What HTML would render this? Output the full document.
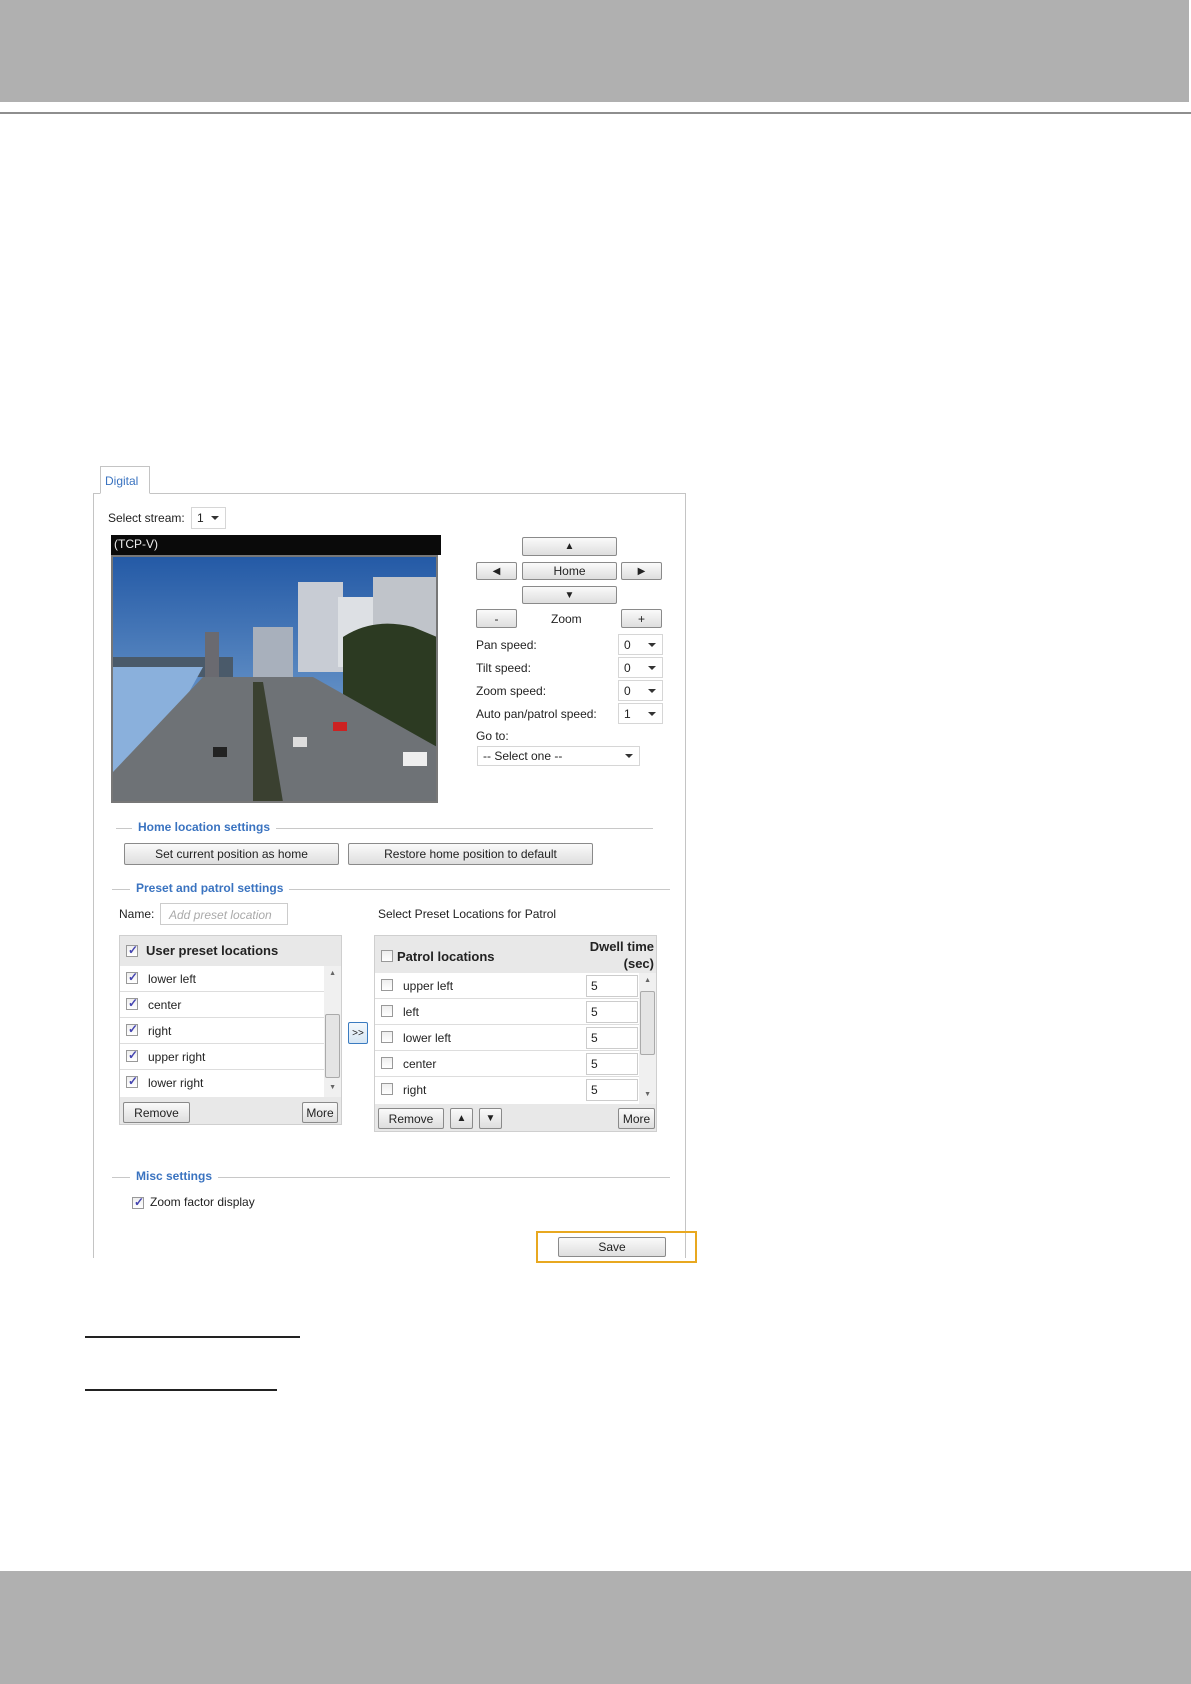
<!DOCTYPE html>
<html><head><meta charset="utf-8">
<style>
*{margin:0;padding:0;box-sizing:border-box}
body{width:1191px;height:1684px;position:relative;background:#fff;font-family:"Liberation Sans",Arial,sans-serif;font-size:12px;color:#222;overflow:hidden}
.a{position:absolute}
.btn{position:absolute;border:1px solid #8a8a8a;border-radius:2px;background:linear-gradient(#fafafa,#dedede);text-align:center;font-size:12px;color:#222;display:flex;align-items:center;justify-content:center}
.sel{position:absolute;border:1px solid #d6d6d6;background:#fff;font-size:12px;padding-left:5px;display:flex;align-items:center}
.sel:after{content:"";position:absolute;right:6px;top:50%;margin-top:-2px;border-left:4px solid transparent;border-right:4px solid transparent;border-top:4px solid #333}
.lbl{position:absolute;font-size:12px;color:#222}
.hd{position:absolute;font-size:12px;font-weight:bold;color:#3a73c0;background:#fff;padding:0 6px}
.hl{position:absolute;height:1px;background:#c8c8c8}
.cb{position:absolute;width:12px;height:12px;border:1px solid #999;background:linear-gradient(#eee,#fff)}
.cb.on:after{content:"✓";position:absolute;left:1px;top:-3px;font-size:12px;color:#4444b0;font-weight:bold}
.row{position:absolute;left:0;right:17px;height:26px;border-bottom:1px solid #ddd;background:#fff}
.row span{position:absolute;left:28px;top:6px;font-size:12px}
.row .cb{left:6px;top:6px}
.inp{position:absolute;width:52px;height:22px;top:2px;border:1px solid #ccc;background:#fff;font-size:12px;padding:3px 0 0 4px}
.ar{position:absolute;right:5px;font-size:7px;color:#666}
</style></head><body>
<div class="a" style="left:0;top:0;width:1189px;height:102px;background:#b0b0b0"></div>
<div class="a" style="left:0;top:112px;width:1191px;height:2px;background:#8e8e8e"></div>
<div class="a" style="left:0;top:1571px;width:1191px;height:113px;background:#b0b0b0"></div>
<div class="a" style="left:85px;top:1336px;width:215px;height:2px;background:#222"></div>
<div class="a" style="left:85px;top:1389px;width:192px;height:2px;background:#222"></div>

<div class="a" style="left:93px;top:493px;width:593px;height:765px;border:1px solid #c4c4c4;border-bottom:none"></div>
<div class="a" style="left:100px;top:466px;width:50px;height:28px;border:1px solid #c4c4c4;border-bottom:1px solid #fff;background:#fff;color:#3a73c0;font-size:12px;padding:7px 0 0 4px">Digital</div>

<div class="lbl" style="left:108px;top:511px">Select stream:</div>
<div class="sel" style="left:191px;top:507px;width:35px;height:22px">1</div>

<div class="a" style="left:111px;top:535px;width:330px;height:20px;background:#0a0a0a;color:#eee;font-size:12px;padding:2px 0 0 3px">(TCP-V)</div>
<div class="a" style="left:111px;top:555px;width:327px;height:248px;border:2px solid #777;background:#3a6aa8;overflow:hidden">
<svg width="324" height="245" viewBox="0 0 324 245">
<defs><linearGradient id="sky" x1="0" y1="0" x2="0" y2="1"><stop offset="0" stop-color="#245aa6"/><stop offset="1" stop-color="#8fb6dc"/></linearGradient></defs>
<rect width="324" height="245" fill="url(#sky)"/>
<rect x="0" y="100" width="120" height="20" fill="#4a5a6a"/>
<rect x="92" y="75" width="14" height="45" fill="#6a6a70"/>
<rect x="140" y="70" width="40" height="50" fill="#a8b0bc"/>
<rect x="185" y="25" width="45" height="90" fill="#c8ccd4"/>
<rect x="225" y="40" width="40" height="70" fill="#dde0e4"/>
<rect x="260" y="20" width="64" height="70" fill="#c0c4ca"/>
<path d="M230 80 Q260 60 300 70 L324 80 L324 190 L230 140Z" fill="#2c3a22"/>
<path d="M0 110 L90 110 L40 200 L0 215Z" fill="#8ab0dc"/>
<path d="M90 120 L200 120 L324 190 L324 245 L0 245 L0 215Z" fill="#6e7276"/>
<path d="M140 125 L150 125 L170 245 L140 245Z" fill="#3a4030"/>
<rect x="100" y="190" width="14" height="10" fill="#222"/><rect x="180" y="180" width="14" height="10" fill="#ddd"/>
<rect x="220" y="165" width="14" height="9" fill="#c22"/><rect x="290" y="195" width="24" height="14" fill="#eee"/>
</svg></div>

<div class="btn" style="left:522px;top:537px;width:95px;height:19px;font-size:10px">▲</div>
<div class="btn" style="left:476px;top:562px;width:41px;height:18px;font-size:10px">◀</div>
<div class="btn" style="left:522px;top:562px;width:95px;height:18px">Home</div>
<div class="btn" style="left:621px;top:562px;width:41px;height:18px;font-size:10px">▶</div>
<div class="btn" style="left:522px;top:586px;width:95px;height:18px;font-size:10px">▼</div>
<div class="btn" style="left:476px;top:609px;width:41px;height:19px">-</div>
<div class="lbl" style="left:551px;top:612px">Zoom</div>
<div class="btn" style="left:621px;top:609px;width:41px;height:19px">+</div>
<div class="lbl" style="left:476px;top:638px">Pan speed:</div>
<div class="sel" style="left:618px;top:634px;width:45px;height:21px">0</div>
<div class="lbl" style="left:476px;top:661px">Tilt speed:</div>
<div class="sel" style="left:618px;top:657px;width:45px;height:21px">0</div>
<div class="lbl" style="left:476px;top:684px">Zoom speed:</div>
<div class="sel" style="left:618px;top:680px;width:45px;height:21px">0</div>
<div class="lbl" style="left:476px;top:707px">Auto pan/patrol speed:</div>
<div class="sel" style="left:618px;top:703px;width:45px;height:21px">1</div>
<div class="lbl" style="left:476px;top:729px">Go to:</div>
<div class="sel" style="left:477px;top:746px;width:163px;height:20px">-- Select one --</div>

<div class="hl" style="left:116px;top:828px;width:537px"></div>
<div class="hd" style="left:132px;top:820px">Home location settings</div>
<div class="btn" style="left:124px;top:843px;width:215px;height:22px">Set current position as home</div>
<div class="btn" style="left:348px;top:843px;width:245px;height:22px">Restore home position to default</div>

<div class="hl" style="left:112px;top:889px;width:558px"></div>
<div class="hd" style="left:130px;top:881px">Preset and patrol settings</div>
<div class="lbl" style="left:119px;top:907px">Name:</div>
<div class="a" style="left:160px;top:903px;width:128px;height:22px;border:1px solid #ccc;color:#aaa;font-style:italic;font-size:12px;padding:4px 0 0 8px">Add preset location</div>
<div class="lbl" style="left:378px;top:907px">Select Preset Locations for Patrol</div>

<div class="a" style="left:119px;top:935px;width:223px;height:190px;border:1px solid #cfcfcf;background:#e8e8e8">
 <div class="cb on" style="left:6px;top:9px"></div>
 <div class="a" style="left:26px;top:7px;font-weight:bold;font-size:13px">User preset locations</div>
 <div class="a" style="left:0;top:30px;width:221px;height:131px;background:#fff">
  <div class="row" style="top:0"><div class="cb on"></div><span>lower left</span></div>
  <div class="row" style="top:26px"><div class="cb on"></div><span>center</span></div>
  <div class="row" style="top:52px"><div class="cb on"></div><span>right</span></div>
  <div class="row" style="top:78px"><div class="cb on"></div><span>upper right</span></div>
  <div class="row" style="top:104px;border:none"><div class="cb on"></div><span>lower right</span></div>
  <div class="a" style="right:0;top:0;width:17px;height:131px;background:#f0f0f0"></div>
  <div class="ar" style="top:4px">▲</div><div class="ar" style="top:118px">▼</div>
  <div class="a" style="right:1px;top:48px;width:15px;height:64px;border:1px solid #aaa;border-radius:2px;background:#e4e4e4"></div>
 </div>
 <div class="btn" style="left:3px;top:166px;width:67px;height:21px">Remove</div>
 <div class="btn" style="left:182px;top:166px;width:36px;height:21px">More</div>
</div>
<div class="btn" style="left:348px;top:1022px;width:20px;height:22px;border-color:#3a7bc0;background:linear-gradient(#f4f8fc,#d6e6f4);font-size:10px">&gt;&gt;</div>

<div class="a" style="left:374px;top:935px;width:283px;height:197px;border:1px solid #cfcfcf;background:#e8e8e8">
 <div class="cb" style="left:6px;top:14px"></div>
 <div class="a" style="left:22px;top:13px;font-weight:bold;font-size:13px">Patrol locations</div>
 <div class="a" style="right:2px;top:2px;font-weight:bold;font-size:13px;text-align:right;line-height:17px">Dwell time<br>(sec)</div>
 <div class="a" style="left:0;top:37px;width:281px;height:131px;background:#fff">
  <div class="row" style="top:0"><div class="cb"></div><span>upper left</span><div class="inp" style="left:211px">5</div></div>
  <div class="row" style="top:26px"><div class="cb"></div><span>left</span><div class="inp" style="left:211px">5</div></div>
  <div class="row" style="top:52px"><div class="cb"></div><span>lower left</span><div class="inp" style="left:211px">5</div></div>
  <div class="row" style="top:78px"><div class="cb"></div><span>center</span><div class="inp" style="left:211px">5</div></div>
  <div class="row" style="top:104px;border:none"><div class="cb"></div><span>right</span><div class="inp" style="left:211px">5</div></div>
  <div class="a" style="right:0;top:0;width:17px;height:131px;background:#f0f0f0"></div>
  <div class="ar" style="top:4px">▲</div><div class="ar" style="top:118px">▼</div>
  <div class="a" style="right:1px;top:18px;width:15px;height:64px;border:1px solid #aaa;border-radius:2px;background:#e4e4e4"></div>
 </div>
 <div class="btn" style="left:3px;top:172px;width:66px;height:21px">Remove</div>
 <div class="btn" style="left:75px;top:172px;width:23px;height:21px;font-size:10px">▲</div>
 <div class="btn" style="left:104px;top:172px;width:23px;height:21px;font-size:10px">▼</div>
 <div class="btn" style="left:243px;top:172px;width:37px;height:21px">More</div>
</div>

<div class="hl" style="left:112px;top:1177px;width:558px"></div>
<div class="hd" style="left:130px;top:1169px">Misc settings</div>
<div class="cb on" style="left:132px;top:1197px"></div>
<div class="lbl" style="left:150px;top:1195px">Zoom factor display</div>

<div class="a" style="left:536px;top:1231px;width:161px;height:32px;border:2px solid #e8a820"></div>
<div class="btn" style="left:558px;top:1237px;width:108px;height:20px">Save</div>
</body></html>
